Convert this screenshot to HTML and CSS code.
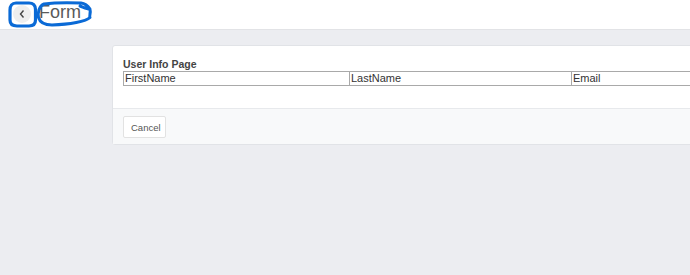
FILE: index.html
```html
<!DOCTYPE html>
<html>
<head>
<meta charset="utf-8">
<link rel="stylesheet" href="styles.css">
</head>
<body>
<header class="topbar">
  <button class="back" aria-label="Back">
    <svg width="8" height="10" viewBox="0 0 8 10"><path d="M5.5 1.5 L2.5 5 L5.5 8.5" fill="none" stroke="#444" stroke-width="1.4"/></svg>
  </button>
  <span class="title">Form</span>
  <svg class="marks" width="100" height="30" viewBox="0 0 100 30">
    <path d="M16 3 C12 3 10 6 10 10 L10 20 C10 24.5 12.5 26 17 26 L29 26 C33.5 26 35.5 24 35.5 20 L35.5 9.5 C35.5 5.5 33 3 29 3 Z" fill="none" stroke="#0a6ad6" stroke-width="3.2" stroke-linejoin="round"/>
    <path d="M44 4 C55 2.5 70 2.5 81 3 C85 3.5 88 6 90 9 C88 9.5 84 7.5 80 6 M90 9 C91 13 89 16 90 17.5 C86 21.5 70 24.5 52 25 C44 25 40 22.5 38.5 17.5 C37.5 13 39 6 44 4" fill="none" stroke="#0a6ad6" stroke-width="3" stroke-linecap="round" stroke-linejoin="round"/>
  </svg>
</header>
<main class="page">
  <section class="card">
    <div class="card-body">
      <h2 class="card-title">User Info Page</h2>
      <table class="grid">
        <colgroup><col class="c1"><col class="c2"><col class="c3"></colgroup>
        <tr><td>FirstName</td><td>LastName</td><td>Email</td></tr>
      </table>
    </div>
    <div class="card-footer">
      <button class="btn">Cancel</button>
    </div>
  </section>
</main>
</body>
</html>
```
FILE: styles.css
```css
html, body {
  margin: 0;
  padding: 0;
}
body {
  width: 690px;
  height: 275px;
  overflow: hidden;
  background: #ecedf1;
  font-family: "Liberation Sans", Arial, sans-serif;
  color: #333;
}
.topbar {
  position: relative;
  height: 30px;
  background: #fff;
  border-bottom: 1px solid #e2e3e6;
  display: flex;
  align-items: center;
  padding-left: 13px;
  box-sizing: border-box;
}
.back {
  width: 18px;
  height: 18px;
  border-radius: 50%;
  border: none;
  background: #eeeeee;
  padding: 0;
  display: flex;
  align-items: center;
  justify-content: center;
  margin-right: 8px;
  margin-top: -2px;
}
.title {
  font-size: 18px;
  color: #5a5a5a;
  margin-top: -5px;
}
.marks {
  position: absolute;
  left: 0;
  top: 0;
}
.page {
  padding: 15px 0 0 112px;
  overflow: hidden;
}
.card {
  width: 700px;
  background: #fff;
  border: 1px solid #e1e3e7;
  border-radius: 3px;
}
.card-body {
  padding: 12px 0 22px 10px;
}
.card-title {
  margin: 0 0 1px;
  font-size: 10.5px;
  font-weight: bold;
  color: #444;
  line-height: 12px;
}
.grid {
  border-collapse: collapse;
  width: 672px;
  table-layout: fixed;
}
.c1 { width: 226px; }
.c2 { width: 222px; }
.c3 { width: 224px; }
.grid td {
  border: 1px solid #a9a9a9;
  font-size: 11px;
  color: #333;
  padding: 0 0 0 1px;
  height: 13px;
  line-height: 13px;
}
.card-footer {
  background: #f8f9fa;
  border-top: 1px solid #e7e9ec;
  padding: 7px 10px 6px;
}
.btn {
  font-family: "Liberation Sans", Arial, sans-serif;
  font-size: 9.5px;
  color: #555;
  background: #fff;
  border: 1px solid #e2e2e2;
  border-radius: 2px;
  padding: 0 7px;
  height: 22px;
  width: 43px;
}
```
